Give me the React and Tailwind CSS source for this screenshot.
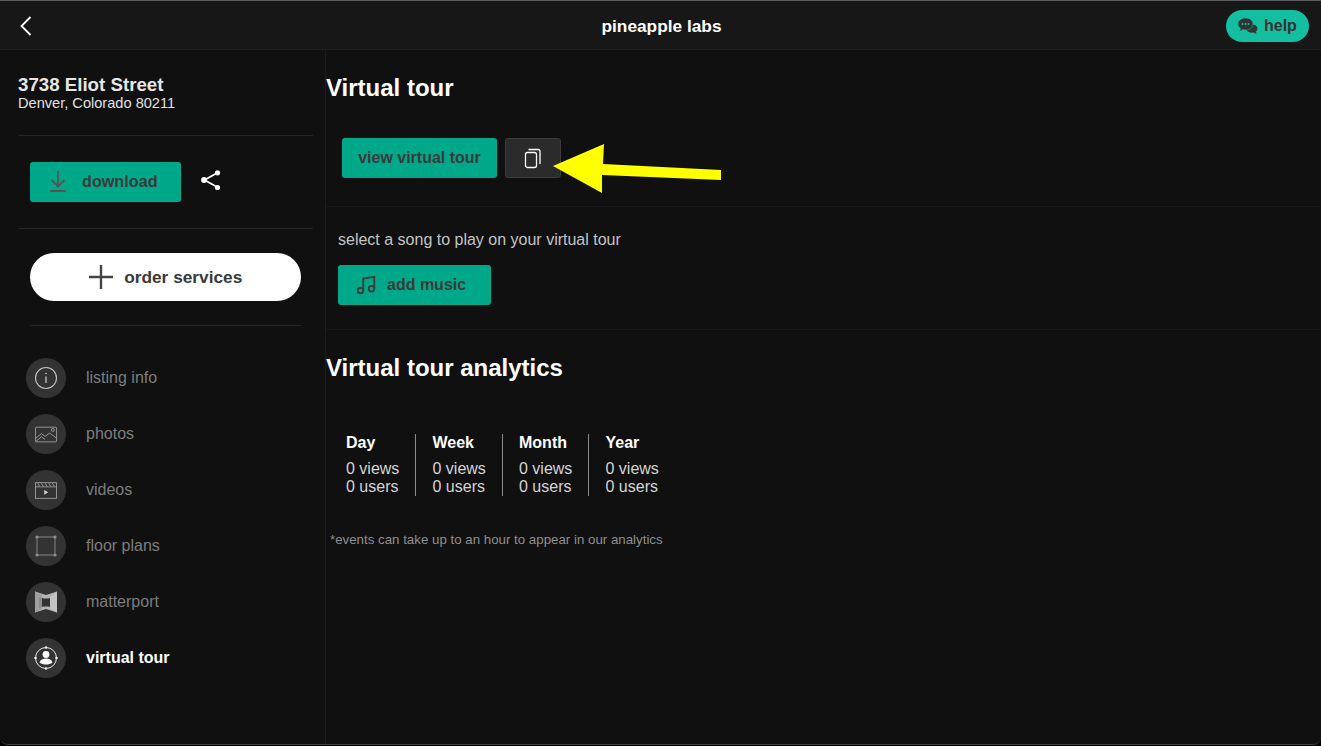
import React from "react";

function InfoIcon() {
  return (
    <svg viewBox="0 0 24 24" className="w-[24px] h-[24px]" fill="none" stroke="#c4c4c4" strokeWidth="1.1">
      <circle cx="12" cy="12" r="10.5" />
      <path d="M12 10.500v6.500" strokeWidth="1.300" />
      <circle cx="12" cy="7.500" r="0.800" fill="#c4c4c4" stroke="none" />
    </svg>
  );
}

function PhotoIcon() {
  return (
    <svg viewBox="0 0 24 18" className="w-[22px] h-[17px]" fill="none" stroke="#a8a8a8" strokeWidth="0.9">
      <rect x="0.5" y="1" width="23" height="16" rx="0.8" />
      <path d="M1 13l6-5 4 3 5-3.500 7 5M1 16.500l6-5 4 3" />
      <circle cx="19.500" cy="4" r="1.600" />
    </svg>
  );
}

function VideoIcon() {
  return (
    <svg viewBox="0 0 24 18" className="w-[22px] h-[17px]" fill="none" stroke="#a8a8a8" strokeWidth="0.9">
      <rect x="0.5" y="0.5" width="23" height="17" />
      <path d="M0.5 5h23M3 1l2 3.500M7 1l2 3.500M11 1l2 3.500M15 1l2 3.500M19 1l2 3.500" />
      <path d="M10 8.500l4.500 2.500-4.500 2.500z" fill="#d0d0d0" stroke="none" />
    </svg>
  );
}

function FloorIcon() {
  return (
    <svg viewBox="0 0 24 24" className="w-[24px] h-[24px]" fill="#8f8f8f" stroke="#8f8f8f" strokeWidth="0.9">
      <rect x="3" y="3" width="18" height="18" fill="none" />
      <circle cx="3" cy="3" r="1.600" stroke="none" />
      <circle cx="21" cy="3" r="1.600" stroke="none" />
      <circle cx="3" cy="21" r="1.600" stroke="none" />
      <circle cx="21" cy="21" r="1.600" stroke="none" />
    </svg>
  );
}

function MatterportIcon() {
  return (
    <svg viewBox="0 0 24 24" className="w-[24px] h-[24px]">
      <path d="M1 1.500L12 5l11-3.500v21L12 19 1 22.500z" fill="#b4b4b4" />
      <path d="M1 1.500L8 4.500V19L1 22.500z" fill="#a0a0a0" />
      <path d="M16 7.500l7-6v21l-7-4z" fill="#c4c4c4" />
      <path d="M8 8c2.500.8 5.500.8 8 0v9c-2.500-.6-5.500-.6-8 0z" fill="#333333" />
      <path d="M5 7l3 1v9l-3 1.500z" fill="#8c8c8c" />
    </svg>
  );
}

function TourIcon() {
  return (
    <svg viewBox="0 0 24 24" className="w-[24px] h-[24px]" fill="none">
      <circle cx="12" cy="12" r="10.500" stroke="#e8e8e8" strokeWidth="1" />
      <circle cx="12" cy="8.500" r="3.400" fill="#ffffff" />
      <path d="M5.500 16.500c1-3 3.500-4 6.500-4s5.500 1 6.500 4c-2 1.500-4 2-6.500 2s-4.500-.5-6.500-2z" fill="#ffffff" />
      <path d="M12 0.200v2.600M12 21.200v2.600M0.200 12h2.600M21.200 12h2.600" stroke="#ffffff" strokeWidth="1.600" />
    </svg>
  );
}

const navItems = [
  { label: "listing info", icon: <InfoIcon /> },
  { label: "photos", icon: <PhotoIcon /> },
  { label: "videos", icon: <VideoIcon /> },
  { label: "floor plans", icon: <FloorIcon /> },
  { label: "matterport", icon: <MatterportIcon /> },
  { label: "virtual tour", icon: <TourIcon />, active: true },
];

const stats = ["Day", "Week", "Month", "Year"];

export default function App() {
  return (
    <div className="relative h-[746px] w-[1321px] overflow-hidden bg-black font-['Liberation_Sans',Arial,sans-serif]">
      <div className="flex h-[745px] flex-col overflow-hidden rounded-b-[8px] border-t border-t-[#5c5c60] border-b border-b-[#3c3c3c] bg-[#101010]">
        <header className="flex h-[49px] shrink-0 items-center justify-between border-b border-[#1f1f1f] bg-[#171717] pt-[2px] pl-[20px] pr-[12px]">
          <svg viewBox="0 0 12 20" className="h-[20px] w-[12px]" fill="none" stroke="#ffffff" strokeWidth="1.800">
            <path d="M10.500 1L1.500 10l9 9" />
          </svg>
          <h1 className="ml-[65px] pt-[1px] text-[17.300px] font-bold text-white">pineapple labs</h1>
          <button className="flex h-[32px] w-[83px] items-center gap-[6px] rounded-full bg-[#14bfa1] pl-[12px] text-[16px] font-bold text-[#333333]">
            <svg viewBox="0 0 20 16" className="h-[16px] w-[20px] shrink-0">
              <path d="M12 6.500c4 -.5 7.500 1 7.500 4 0 1.500-.8 2.500-1.800 3.200l1 2.300-3.200-1.500c-3.500.6-6.500-.8-7-3z" fill="#333333" />
              <path d="M7.500 0C11.600 0 15 2.500 15 6s-3.400 6-7.500 6c-.9 0-1.700-.1-2.500-.4L1.500 13.500l.9-3.200C.9 9.200 0 7.700 0 6 0 2.500 3.400 0 7.500 0z" fill="#333333" stroke="#14bfa1" strokeWidth="0.600" />
              <circle cx="4.500" cy="6" r="1" fill="#14bfa1" />
              <circle cx="7.500" cy="6" r="1" fill="#14bfa1" />
              <circle cx="10.500" cy="6" r="1" fill="#14bfa1" />
            </svg>
            help
          </button>
        </header>

        <div className="flex flex-1">
          <aside className="w-[326px] shrink-0 border-r border-[#1c1c1c]">
            <div className="pr-[12px] pl-[18px]">
              <div className="h-[86px] border-b border-[#262626] pt-[25px]">
                <div className="text-[18.700px] leading-[20px] font-bold text-[#e6e6e6]">3738 Eliot Street</div>
                <div className="text-[14.600px] leading-[16px] text-[#e0e0e0]">Denver, Colorado 80211</div>
              </div>
            </div>

            <div className="pr-[12px] pl-[18px]">
              <div className="flex h-[93px] items-center gap-[19px] border-b border-[#262626] pl-[12px] pb-[1px]">
                <button className="flex h-[40px] w-[151px] items-center rounded-[3px] bg-[#00a88a] pl-[20px] text-[16.200px] font-bold text-[#3a3a3a]">
                  <svg viewBox="0 0 16 21" className="mr-[16px] h-[21px] w-[16px]" fill="none" stroke="#555555" strokeWidth="1.800">
                    <path d="M8 0v15M1.500 9L8 15.500 14.500 9" />
                    <path d="M0 20h16" strokeWidth="2" />
                  </svg>
                  download
                </button>
                <svg viewBox="0 0 22 22" className="mb-[3px] h-[22px] w-[22px]" fill="#ffffff" stroke="#ffffff" strokeWidth="1.800">
                  <path d="M18 3.500L4.500 11 18 18.500" fill="none" />
                  <circle cx="17.500" cy="3.800" r="2.600" stroke="none" />
                  <circle cx="4" cy="11" r="2.900" stroke="none" />
                  <circle cx="17.500" cy="18.500" r="2.600" stroke="none" />
                </svg>
              </div>
            </div>

            <div className="pr-[24px] pl-[30px]">
              <div className="flex h-[97px] items-center border-b border-[#262626]">
                <button className="flex h-[48px] w-full items-center justify-center gap-[11.500px] rounded-full bg-white text-[17.300px] font-bold text-[#3a3a3a]">
                  <svg viewBox="0 0 24 24" className="h-[24px] w-[24px]" fill="none" stroke="#444444" strokeWidth="2.400">
                    <path d="M12 0v24M0 12h24" />
                  </svg>
                  <span className="pt-[2px]">order services</span>
                </button>
              </div>
            </div>

            <nav className="flex flex-col gap-[16px] pt-[32px] pl-[26px]">
              {navItems.map((item) => (
                <div key={item.label} className="flex items-center gap-[20px]">
                  <div className="flex h-[40px] w-[40px] items-center justify-center rounded-full bg-[#333333]">
                    {item.icon}
                  </div>
                  <span className={item.active ? "text-[16px] font-bold text-white" : "text-[16px] text-[#7d7d7d]"}>
                    {item.label}
                  </span>
                </div>
              ))}
            </nav>
          </aside>

          <main className="relative flex-1">
            <section className="h-[157px] border-b border-[#1a1a1a]">
              <h2 className="h-[88px] pt-[22px] text-[24px] leading-[32px] font-bold text-white">Virtual tour</h2>
              <div className="flex gap-[8px] pl-[16px]">
                <button className="h-[40px] w-[155px] rounded-[3px] bg-[#00a88a] text-[16px] font-bold text-[#3a3a3a]">
                  view virtual tour
                </button>
                <button className="flex h-[40px] w-[56px] items-center justify-center rounded-[3px] border border-[#3c3c3c] bg-[#2b2b2b]">
                  <svg viewBox="0 0 18 21" className="h-[21px] w-[18px]" fill="none" stroke="#ffffff" strokeWidth="1.300">
                    <rect x="1.500" y="4.500" width="11" height="15" rx="2" />
                    <path d="M4.500 1.500H14a2 2 0 0 1 2 2V16" />
                  </svg>
                </button>
              </div>
            </section>

            <section className="h-[123px] border-b border-[#1a1a1a] pl-[12px] pt-[24px]">
              <p className="text-[16px] leading-[18px] text-[#c4c4c4]">select a song to play on your virtual tour</p>
              <button className="mt-[16px] flex h-[40px] w-[153px] items-center rounded-[3px] bg-[#00a88a] pl-[17px] text-[16px] font-bold text-[#3a3a3a]">
                <svg viewBox="0 0 24 24" className="mr-[10px] h-[22px] w-[22px]" fill="none" stroke="#3a3a3a" strokeWidth="2">
                  <path d="M9 18V5l12-2v13" />
                  <circle cx="6" cy="18" r="3" />
                  <circle cx="18" cy="16" r="3" />
                </svg>
                add music
              </button>
            </section>

            <h2 className="pt-[22px] text-[24px] leading-[32px] font-bold text-white">Virtual tour analytics</h2>

            <div className="mt-[50px] flex pl-[20px] text-[16px] leading-[18px] text-[#d4d4d4]">
              <div className="h-[62px] w-[70px] border-r border-[#8a8a8a]">
                <div className="mb-[8px] font-bold text-white">{stats[0]}</div>
                <div>0 views</div>
                <div>0 users</div>
              </div>
              {stats.slice(1).map((s, i) => (
                <div key={s} className={i < 2 ? "h-[62px] w-[86.500px] border-r border-[#8a8a8a] pl-[16.500px]" : "h-[62px] pl-[16.500px]"}>
                  <div className="mb-[8px] font-bold text-white">{s}</div>
                  <div>0 views</div>
                  <div>0 users</div>
                </div>
              ))}
            </div>

            <p className="mt-[36px] pl-[4px] text-[13.300px] leading-[16px] text-[#8f8f8f]">
              *events can take up to an hour to appear in our analytics
            </p>

            {/* annotation arrow */}
            <svg className="absolute left-[226px] top-[92px] h-[52px] w-[172px]" viewBox="0 0 172 52">
              <path d="M1 24L52 2l-1 20 118 6v10L50 33v18z" fill="#ffff00" />
            </svg>
          </main>
        </div>
      </div>
    </div>
  );
}
